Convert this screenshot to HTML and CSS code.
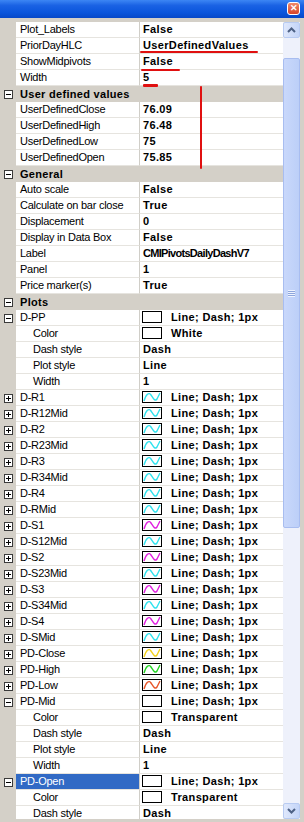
FILE: index.html
```html
<!DOCTYPE html>
<html lang="en">
<head>
    <meta charset="UTF-8">
    <title>Indicator Properties</title>
    <link rel="stylesheet" href="styles.css">
</head>
<body>
    <div class="window">
        <div class="titlebar">
            <span class="close-btn">&#x2715;</span>
        </div>
        <div class="frame">
            <div class="grid">
                <div class="row"><div class="gutter"></div><div class="name">Plot_Labels</div><div class="value">False</div></div>
                <div class="row"><div class="gutter"></div><div class="name">PriorDayHLC</div><div class="value">UserDefinedValues</div></div>
                <div class="row"><div class="gutter"></div><div class="name">ShowMidpivots</div><div class="value">False</div></div>
                <div class="row"><div class="gutter"></div><div class="name">Width</div><div class="value">5</div></div>

                <div class="row cat"><div class="gutter"><span class="exp"></span></div><div class="label">User defined values</div></div>
                <div class="row"><div class="gutter"></div><div class="name">UserDefinedClose</div><div class="value">76.09</div></div>
                <div class="row"><div class="gutter"></div><div class="name">UserDefinedHigh</div><div class="value">76.48</div></div>
                <div class="row"><div class="gutter"></div><div class="name">UserDefinedLow</div><div class="value">75</div></div>
                <div class="row"><div class="gutter"></div><div class="name">UserDefinedOpen</div><div class="value">75.85</div></div>

                <div class="row cat"><div class="gutter"><span class="exp"></span></div><div class="label">General</div></div>
                <div class="row"><div class="gutter"></div><div class="name">Auto scale</div><div class="value">False</div></div>
                <div class="row"><div class="gutter"></div><div class="name">Calculate on bar close</div><div class="value">True</div></div>
                <div class="row"><div class="gutter"></div><div class="name">Displacement</div><div class="value">0</div></div>
                <div class="row"><div class="gutter"></div><div class="name">Display in Data Box</div><div class="value">False</div></div>
                <div class="row"><div class="gutter"></div><div class="name">Label</div><div class="value tight">CMIPivotsDailyDashV7</div></div>
                <div class="row"><div class="gutter"></div><div class="name">Panel</div><div class="value">1</div></div>
                <div class="row"><div class="gutter"></div><div class="name">Price marker(s)</div><div class="value">True</div></div>

                <div class="row cat"><div class="gutter"><span class="exp"></span></div><div class="label">Plots</div></div>
                <div class="row"><div class="gutter"><span class="exp"></span></div><div class="name">D-PP</div><div class="value"><span class="swatch"></span>Line; Dash; 1px</div></div>
                <div class="row"><div class="gutter"></div><div class="name sub">Color</div><div class="value"><span class="swatch"></span>White</div></div>
                <div class="row"><div class="gutter"></div><div class="name sub">Dash style</div><div class="value">Dash</div></div>
                <div class="row"><div class="gutter"></div><div class="name sub">Plot style</div><div class="value">Line</div></div>
                <div class="row"><div class="gutter"></div><div class="name sub">Width</div><div class="value">1</div></div>

                <div class="row"><div class="gutter"><span class="exp plus"></span></div><div class="name">D-R1</div><div class="value"><span class="swatch"><svg class="wave cyan" viewBox="0 0 18 10"><path d="M1 9 C3 2 6 0 8 3 S12 10 14 7 L17 1"/></svg></span>Line; Dash; 1px</div></div>
                <div class="row"><div class="gutter"><span class="exp plus"></span></div><div class="name">D-R12Mid</div><div class="value"><span class="swatch"><svg class="wave cyan" viewBox="0 0 18 10"><path d="M1 9 C3 2 6 0 8 3 S12 10 14 7 L17 1"/></svg></span>Line; Dash; 1px</div></div>
                <div class="row"><div class="gutter"><span class="exp plus"></span></div><div class="name">D-R2</div><div class="value"><span class="swatch"><svg class="wave cyan" viewBox="0 0 18 10"><path d="M1 9 C3 2 6 0 8 3 S12 10 14 7 L17 1"/></svg></span>Line; Dash; 1px</div></div>
                <div class="row"><div class="gutter"><span class="exp plus"></span></div><div class="name">D-R23Mid</div><div class="value"><span class="swatch"><svg class="wave cyan" viewBox="0 0 18 10"><path d="M1 9 C3 2 6 0 8 3 S12 10 14 7 L17 1"/></svg></span>Line; Dash; 1px</div></div>
                <div class="row"><div class="gutter"><span class="exp plus"></span></div><div class="name">D-R3</div><div class="value"><span class="swatch"><svg class="wave cyan" viewBox="0 0 18 10"><path d="M1 9 C3 2 6 0 8 3 S12 10 14 7 L17 1"/></svg></span>Line; Dash; 1px</div></div>
                <div class="row"><div class="gutter"><span class="exp plus"></span></div><div class="name">D-R34Mid</div><div class="value"><span class="swatch"><svg class="wave cyan" viewBox="0 0 18 10"><path d="M1 9 C3 2 6 0 8 3 S12 10 14 7 L17 1"/></svg></span>Line; Dash; 1px</div></div>
                <div class="row"><div class="gutter"><span class="exp plus"></span></div><div class="name">D-R4</div><div class="value"><span class="swatch"><svg class="wave cyan" viewBox="0 0 18 10"><path d="M1 9 C3 2 6 0 8 3 S12 10 14 7 L17 1"/></svg></span>Line; Dash; 1px</div></div>
                <div class="row"><div class="gutter"><span class="exp plus"></span></div><div class="name">D-RMid</div><div class="value"><span class="swatch"><svg class="wave cyan" viewBox="0 0 18 10"><path d="M1 9 C3 2 6 0 8 3 S12 10 14 7 L17 1"/></svg></span>Line; Dash; 1px</div></div>
                <div class="row"><div class="gutter"><span class="exp plus"></span></div><div class="name">D-S1</div><div class="value"><span class="swatch"><svg class="wave magenta" viewBox="0 0 18 10"><path d="M1 9 C3 2 6 0 8 3 S12 10 14 7 L17 1"/></svg></span>Line; Dash; 1px</div></div>
                <div class="row"><div class="gutter"><span class="exp plus"></span></div><div class="name">D-S12Mid</div><div class="value"><span class="swatch"><svg class="wave cyan" viewBox="0 0 18 10"><path d="M1 9 C3 2 6 0 8 3 S12 10 14 7 L17 1"/></svg></span>Line; Dash; 1px</div></div>
                <div class="row"><div class="gutter"><span class="exp plus"></span></div><div class="name">D-S2</div><div class="value"><span class="swatch"><svg class="wave magenta" viewBox="0 0 18 10"><path d="M1 9 C3 2 6 0 8 3 S12 10 14 7 L17 1"/></svg></span>Line; Dash; 1px</div></div>
                <div class="row"><div class="gutter"><span class="exp plus"></span></div><div class="name">D-S23Mid</div><div class="value"><span class="swatch"><svg class="wave cyan" viewBox="0 0 18 10"><path d="M1 9 C3 2 6 0 8 3 S12 10 14 7 L17 1"/></svg></span>Line; Dash; 1px</div></div>
                <div class="row"><div class="gutter"><span class="exp plus"></span></div><div class="name">D-S3</div><div class="value"><span class="swatch"><svg class="wave magenta" viewBox="0 0 18 10"><path d="M1 9 C3 2 6 0 8 3 S12 10 14 7 L17 1"/></svg></span>Line; Dash; 1px</div></div>
                <div class="row"><div class="gutter"><span class="exp plus"></span></div><div class="name">D-S34Mid</div><div class="value"><span class="swatch"><svg class="wave cyan" viewBox="0 0 18 10"><path d="M1 9 C3 2 6 0 8 3 S12 10 14 7 L17 1"/></svg></span>Line; Dash; 1px</div></div>
                <div class="row"><div class="gutter"><span class="exp plus"></span></div><div class="name">D-S4</div><div class="value"><span class="swatch"><svg class="wave magenta" viewBox="0 0 18 10"><path d="M1 9 C3 2 6 0 8 3 S12 10 14 7 L17 1"/></svg></span>Line; Dash; 1px</div></div>
                <div class="row"><div class="gutter"><span class="exp plus"></span></div><div class="name">D-SMid</div><div class="value"><span class="swatch"><svg class="wave cyan" viewBox="0 0 18 10"><path d="M1 9 C3 2 6 0 8 3 S12 10 14 7 L17 1"/></svg></span>Line; Dash; 1px</div></div>
                <div class="row"><div class="gutter"><span class="exp plus"></span></div><div class="name">PD-Close</div><div class="value"><span class="swatch"><svg class="wave yellow" viewBox="0 0 18 10"><path d="M1 9 C3 2 6 0 8 3 S12 10 14 7 L17 1"/></svg></span>Line; Dash; 1px</div></div>
                <div class="row"><div class="gutter"><span class="exp plus"></span></div><div class="name">PD-High</div><div class="value"><span class="swatch"><svg class="wave green" viewBox="0 0 18 10"><path d="M1 9 C3 2 6 0 8 3 S12 10 14 7 L17 1"/></svg></span>Line; Dash; 1px</div></div>
                <div class="row"><div class="gutter"><span class="exp plus"></span></div><div class="name">PD-Low</div><div class="value"><span class="swatch"><svg class="wave orange" viewBox="0 0 18 10"><path d="M1 9 C3 2 6 0 8 3 S12 10 14 7 L17 1"/></svg></span>Line; Dash; 1px</div></div>

                <div class="row"><div class="gutter"><span class="exp"></span></div><div class="name">PD-Mid</div><div class="value"><span class="swatch"></span>Line; Dash; 1px</div></div>
                <div class="row"><div class="gutter"></div><div class="name sub">Color</div><div class="value"><span class="swatch"></span>Transparent</div></div>
                <div class="row"><div class="gutter"></div><div class="name sub">Dash style</div><div class="value">Dash</div></div>
                <div class="row"><div class="gutter"></div><div class="name sub">Plot style</div><div class="value">Line</div></div>
                <div class="row"><div class="gutter"></div><div class="name sub">Width</div><div class="value">1</div></div>
                <div class="row selected"><div class="gutter"><span class="exp"></span></div><div class="name">PD-Open</div><div class="value"><span class="swatch"></span>Line; Dash; 1px</div></div>
                <div class="row"><div class="gutter"></div><div class="name sub">Color</div><div class="value"><span class="swatch"></span>Transparent</div></div>
                <div class="row"><div class="gutter"></div><div class="name sub">Dash style</div><div class="value">Dash</div></div>

                <!-- red pen marks drawn over the grid -->
                <span class="mark mark-values"></span>
                <span class="mark mark-false"></span>
                <span class="mark mark-width"></span>
                <span class="mark mark-bracket"></span>
            </div>
            <div class="scrollbar">
                <div class="scroll-btn up"><svg viewBox="0 0 9 6"><path d="M1 5 L4.5 1.5 L8 5"/></svg></div>
                <div class="track">
                    <div class="thumb"><span class="grip"></span></div>
                </div>
                <div class="scroll-btn down"><svg viewBox="0 0 9 6"><path d="M1 1 L4.5 4.5 L8 1"/></svg></div>
            </div>
        </div>
    </div>
</body>
</html>
```

FILE: styles.css
```css
body {
    margin: 0;
    background: #d4d0c8;
    font-family: "Liberation Sans", Arial, sans-serif;
    font-size: 11px;
}

.window {
    width: 304px;
    height: 822px;
    overflow: hidden;
    background: #d4d0c8;
}

.titlebar {
    height: 18px;
    background: linear-gradient(#3c86f4, #1a62e4 30%, #0a55dc 70%, #0648c8);
    display: flex;
    justify-content: flex-end;
    align-items: flex-start;
    padding: 2px 4px 0 0;
    box-sizing: border-box;
}

.close-btn {
    width: 13px;
    height: 13px;
    box-sizing: border-box;
    border: 1px solid #fff;
    border-radius: 3px;
    background: linear-gradient(#f08a6a, #d8442a);
    color: #fff;
    font-size: 9px;
    font-weight: bold;
    line-height: 11px;
    text-align: center;
}

.frame {
    display: flex;
    height: 797px;
    margin-top: 4px;
    overflow: hidden;
}

.grid {
    position: relative;
    width: 283px;
    background: #fff;
}

.row {
    display: flex;
    height: 16px;
}

.gutter {
    width: 16px;
    flex: none;
    background: #d4d0c8;
    display: flex;
    align-items: center;
    padding-left: 4px;
    box-sizing: border-box;
}

.exp {
    position: relative;
    width: 9px;
    height: 9px;
    box-sizing: border-box;
    border: 1px solid #3a3a3a;
    background: #fff;
}

.exp::before {
    content: "";
    position: absolute;
    left: 1px;
    top: 3px;
    width: 5px;
    height: 1px;
    background: #000;
}

.exp.plus::after {
    content: "";
    position: absolute;
    left: 3px;
    top: 1px;
    width: 1px;
    height: 5px;
    background: #000;
}

.name {
    width: 124px;
    flex: none;
    box-sizing: border-box;
    padding-left: 4px;
    line-height: 15px;
    letter-spacing: -0.25px;
    border-right: 1px solid #d0cec8;
    border-bottom: 1px solid #e6e4df;
    white-space: nowrap;
    overflow: hidden;
    color: #000;
}

.name.sub {
    padding-left: 17px;
}

.value {
    flex: 1;
    display: flex;
    align-items: center;
    padding-left: 3px;
    line-height: 15px;
    height: 16px;
    box-sizing: border-box;
    border-bottom: 1px solid #e6e4df;
    font-weight: bold;
    letter-spacing: 0.35px;
    white-space: nowrap;
    overflow: hidden;
}

.value.tight {
    letter-spacing: -0.7px;
}

.swatch {
    display: flex;
    align-items: center;
    justify-content: center;
    width: 20px;
    height: 12px;
    box-sizing: border-box;
    border: 1px solid #000;
    background: #fff;
    margin: 0 9px 1px -1px;
    flex: none;
}

.wave {
    width: 18px;
    height: 10px;
    fill: none;
    stroke-width: 1.4;
}

.wave.cyan { stroke: #2fe2ee; }
.wave.magenta { stroke: #e020e0; }
.wave.yellow { stroke: #f2d21c; }
.wave.green { stroke: #22d422; }
.wave.orange { stroke: #e8562a; }

.row.cat {
    background: #d4d0c8;
}

.row.cat .label {
    padding-left: 4px;
    line-height: 16px;
    font-weight: bold;
    letter-spacing: 0.3px;
}

.row.selected .name {
    background: #316ac5;
    color: #fff;
}

.mark {
    position: absolute;
    background: #e01010;
    border-radius: 1px;
}

.mark-values {
    left: 140px;
    top: 29px;
    width: 118px;
    height: 2px;
}

.mark-false {
    left: 141px;
    top: 47px;
    width: 39px;
    height: 2px;
}

.mark-width {
    left: 143px;
    top: 62px;
    width: 15px;
    height: 3px;
}

.mark-bracket {
    left: 200px;
    top: 64px;
    width: 2px;
    height: 83px;
}

.scrollbar {
    width: 17px;
    margin-right: 4px;
    display: flex;
    flex-direction: column;
    background: #f4f3ee;
}

.scroll-btn {
    height: 16px;
    flex: none;
    box-sizing: border-box;
    border: 1px solid #b8cbf2;
    border-radius: 2px;
    background: linear-gradient(90deg, #dfe8fc, #c4d5f8);
    display: flex;
    align-items: center;
    justify-content: center;
}

.scroll-btn svg {
    width: 9px;
    height: 6px;
    fill: none;
    stroke: #4d6185;
    stroke-width: 2;
}

.track {
    flex: 1;
    padding-top: 20px;
    background: #eef1fb;
}

.thumb {
    height: 470px;
    box-sizing: border-box;
    border: 1px solid #a8bdf0;
    border-radius: 2px;
    background: linear-gradient(90deg, #c9d8fb, #bccff8);
    display: flex;
    align-items: center;
    justify-content: center;
}

.grip {
    width: 7px;
    height: 7px;
    background: repeating-linear-gradient(#eef3fe 0 1px, #8ea6dc 1px 2px);
}
```
